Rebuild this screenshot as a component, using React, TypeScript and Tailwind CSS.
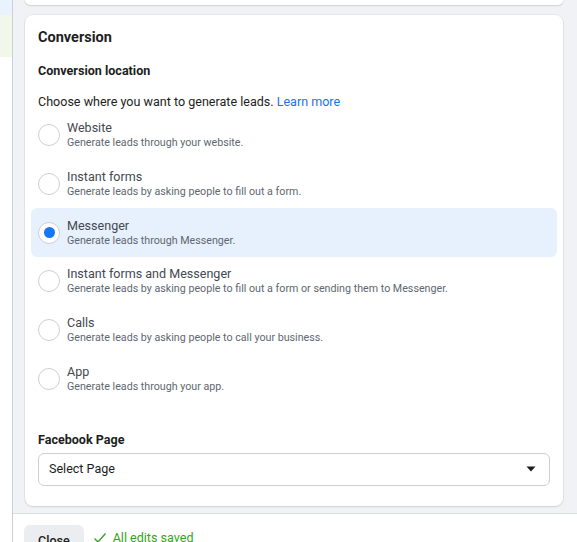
import { useState } from 'react';

const options = [
  { title: 'Website', desc: 'Generate leads through your website.' },
  { title: 'Instant forms', desc: 'Generate leads by asking people to fill out a form.' },
  { title: 'Messenger', desc: 'Generate leads through Messenger.' },
  { title: 'Instant forms and Messenger', desc: 'Generate leads by asking people to fill out a form or sending them to Messenger.' },
  { title: 'Calls', desc: 'Generate leads by asking people to call your business.' },
  { title: 'App', desc: 'Generate leads through your app.' },
];

export default function App() {
  const [selected, setSelected] = useState(2);

  return (
    <div className="w-[577px] h-[542px] flex overflow-hidden bg-white font-['Roboto',_'Liberation_Sans',_sans-serif] text-[#1c1e21]">
      {/* left nav strip */}
      <div className="w-[13px] shrink-0 flex flex-col border-r border-[#ccd0d5]">
        <div className="h-[15px] bg-[#e9f2fd]" />
        <div className="h-[42px] bg-[#f1f8ea]" />
        <div className="flex-1 bg-white" />
      </div>

      <div className="flex-1 flex flex-col min-w-0">
        {/* scroll area */}
        <div className="flex-1 overflow-hidden bg-[#f0f2f5] pl-[12px] pr-[14px]">
          <div className="h-[4.5px] rounded-b-lg bg-white shadow-[0_0_0_1px_rgba(0,0,0,0.04),0_1px_2px_rgba(0,0,0,0.1)]" />

          <div className="mt-[10.5px] rounded-lg bg-white px-[13px] pt-[13px] pb-[20px] shadow-[0_0_0_1px_rgba(0,0,0,0.04),0_1px_2px_rgba(0,0,0,0.1)]">
            <h2 className="text-[14.5px] leading-[20px] font-bold text-[#1c1e21]">Conversion</h2>
            <div className="mt-[14.5px] text-[12.55px] leading-[16px] font-bold text-[#1c1e21]">Conversion location</div>
            <p className="mt-[15px] text-[12.55px] leading-[16px] text-[#1c1e21]">
              Choose where you want to generate leads. <span className="text-[#1b74e4]">Learn more</span>
            </p>

            <div className="mt-[1.5px] -mx-[7px]">
              {options.map((o, i) => {
                const on = i === selected;
                return (
                  <div
                    key={o.title}
                    onClick={() => setSelected(i)}
                    className={`h-[48.7px] px-[7px] flex items-center gap-[7px] rounded-md cursor-pointer ${on ? 'bg-[#e7f0fd]' : ''}`}
                  >
                    <div className="w-[22px] h-[22px] shrink-0 rounded-full border border-[#ccd0d5] bg-white flex items-center justify-center">
                      {on && <div className="w-[11px] h-[11px] rounded-full bg-[#1877f2]" />}
                    </div>
                    <div className="min-w-0">
                      <div className="text-[12.55px] leading-[16px] text-[#444950]">{o.title}</div>
                      <div className="text-[10.7px] leading-[14px] text-[#606770]">{o.desc}</div>
                    </div>
                  </div>
                );
              })}
            </div>

            <div className="mt-[28.8px] text-[12.55px] leading-[16px] font-bold text-[#1c1e21]">Facebook Page</div>
            <div className="mt-[4.7px] h-[33px] rounded-md border border-[#ccd0d5] bg-white pl-[10px] pr-[13px] flex items-center justify-between">
              <span className="text-[12.55px] text-[#1c1e21]">Select Page</span>
              <svg width="10" height="6" viewBox="0 0 10 6">
                <path d="M0.5 0.5h9L5 5.5z" fill="#1c1e21" />
              </svg>
            </div>
          </div>
        </div>

        {/* footer */}
        <div className="h-[29px] shrink-0 border-t border-[#dadde1] bg-white overflow-hidden pl-[11px] pt-[11px] flex items-start gap-[9px]">
          <button className="h-[32px] px-[14px] rounded-md bg-[#ebedf0] text-[12.55px] font-medium text-[#1c1e21]">Close</button>
          <div className="mt-[5px] flex items-center gap-[6px] text-[12.55px] leading-[16px] text-[#36a420]">
            <svg width="14" height="14" viewBox="0 0 14 14" fill="none">
              <path d="M1.5 7.5l3.5 3.5L12.5 2.5" stroke="#36a420" strokeWidth="1.4" />
            </svg>
            <span>All edits saved</span>
          </div>
        </div>
      </div>
    </div>
  );
}
